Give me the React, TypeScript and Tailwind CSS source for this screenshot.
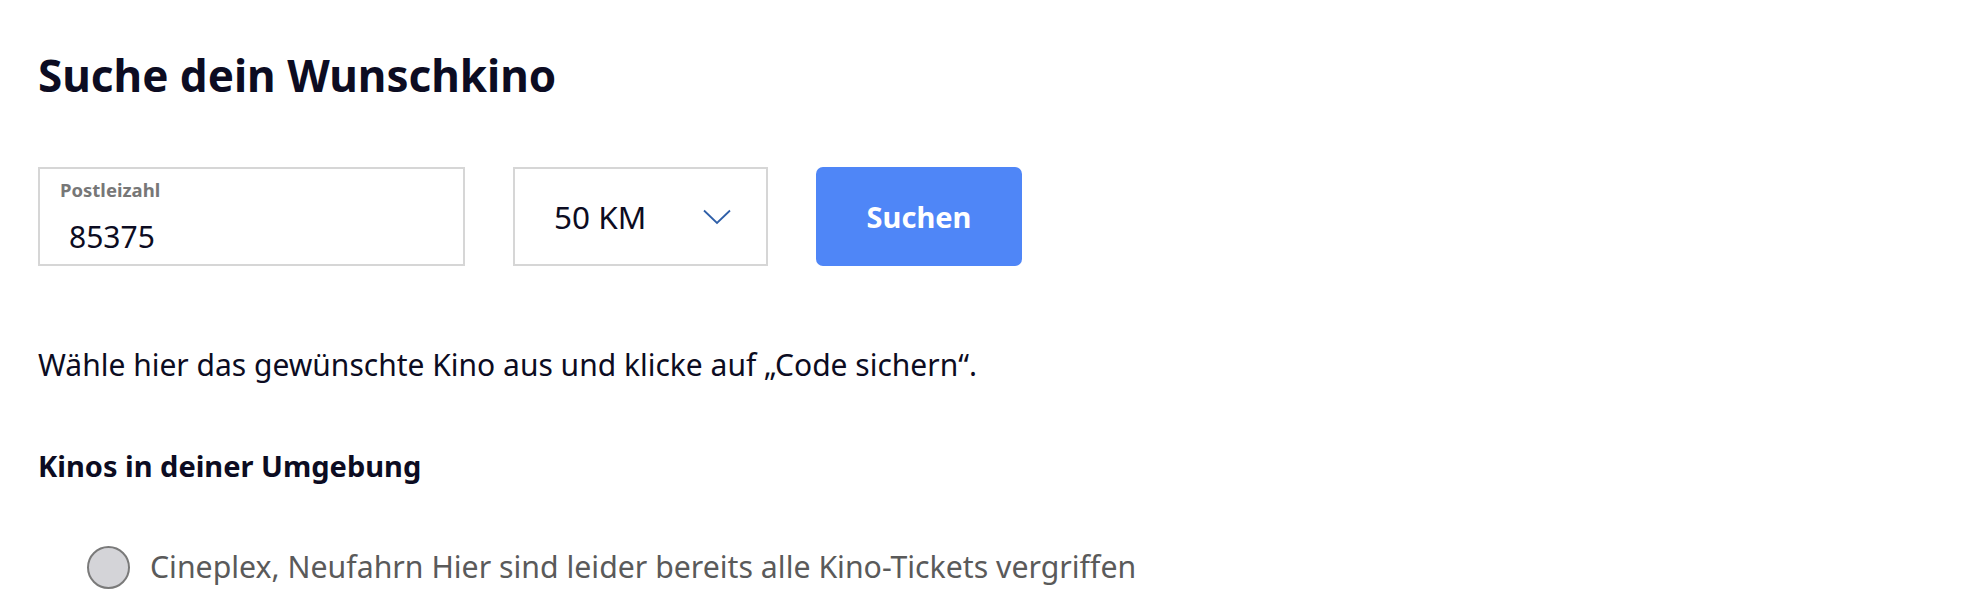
import React from 'react';

const font = { fontFamily: '"Noto Sans", Lato, sans-serif' };

export default function App() {
  return (
    <div className="min-h-screen bg-white text-[#0c0c22]" style={font}>
      <div className="flex flex-col pl-[38px] pt-[53px]">
        <h1 className="text-[44px] leading-none font-bold">Suche dein Wunschkino</h1>

        {/* Suchformular */}
        <div className="mt-[70px] flex items-stretch gap-[48px]">
          <label className="flex h-[99px] w-[427px] flex-col border-2 border-[#d6d6d6] px-[20px] pt-[12px]">
            <span className="text-[18.5px] leading-none font-bold text-[#777777]">Postleizahl</span>
            <span className="mt-[22px] pl-[9px] text-[30px] leading-none">85375</span>
          </label>

          <div className="flex h-[99px] w-[255px] items-center justify-between border-2 border-[#d6d6d6] pl-[39px] pr-[35px]">
            <span className="text-[31.5px] leading-none">50 KM</span>
            <svg width="28" height="16" viewBox="0 0 28 16" fill="none">
              <path d="M1 1.5 L14 14 L27 1.5" stroke="#2f5fa8" strokeWidth="1.8" />
            </svg>
          </div>

          <button className="h-[99px] w-[206px] rounded-[7px] bg-[#4f86f7] text-[29px] font-bold text-white">
            Suchen
          </button>
        </div>

        <p className="mt-[84px] text-[30px] leading-none">
          Wähle hier das gewünschte Kino aus und klicke auf „Code sichern“.
        </p>

        <h2 className="mt-[71px] text-[29px] leading-none font-bold">Kinos in deiner Umgebung</h2>

        {/* Kinoliste */}
        <div className="mt-[66px] ml-[49px] flex items-center gap-[20px]">
          <span className="h-[43px] w-[43px] shrink-0 rounded-full border-2 border-[#7a7a7a] bg-[#d4d4d8]" />
          <span className="text-[30.25px] leading-none text-[#5a5a5a]">
            Cineplex, Neufahrn Hier sind leider bereits alle Kino-Tickets vergriffen
          </span>
        </div>
      </div>
    </div>
  );
}
